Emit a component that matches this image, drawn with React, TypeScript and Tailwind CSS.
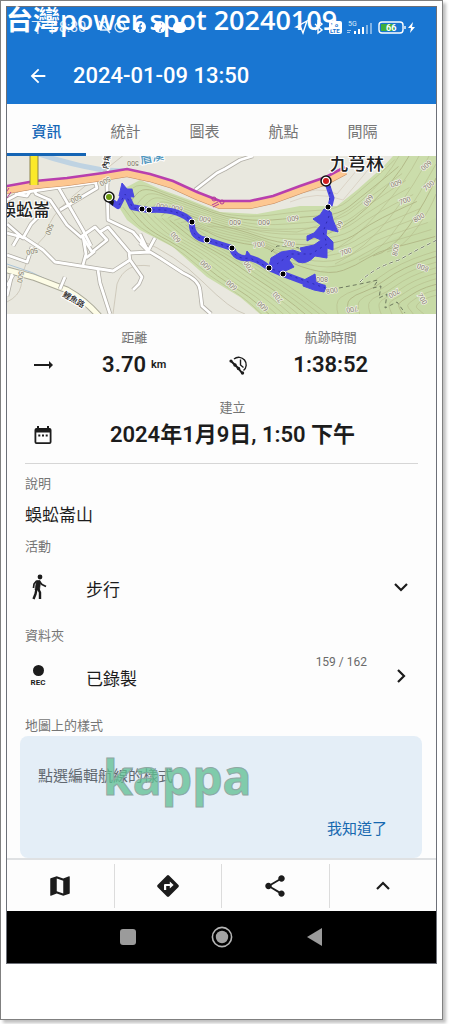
import { useState } from 'react';
import { MdArrowBack, MdMap, MdShare, MdTrendingFlat } from 'react-icons/md';

const TABS = ['資訊', '統計', '圖表', '航點', '間隔'];

type Point = [number, number];

const HILL_TOP: Point[] = [
  [112, 46], [120, 30], [133, 26], [153, 34], [183, 45], [213, 57], [250, 59],
  [293, 52], [330, 51], [350, 34], [376, 11], [386, 0],
];
const RIDGE_TOP: Point[] = [
  [190, 72], [196, 74], [204, 78], [215, 84], [240, 90], [262, 92], [285, 110],
  [325, 122], [350, 112], [372, 98], [400, 92], [430, 84],
];
const HILL_BOTTOM: Point[] = [
  [112, 50], [120, 62], [133, 74], [166, 91], [200, 121], [233, 141], [253, 160],
];
const RIDGE_BOTTOM: Point[] = [
  [190, 72], [204, 80], [220, 92], [244, 104], [270, 120], [300, 140], [326, 160],
];
const EAST_OUTER: Point[] = [
  [326, 160], [322, 146], [335, 136], [356, 130], [380, 112], [405, 100], [430, 92],
];
const EAST_INNER: Point[] = [
  [424, 160], [420, 156], [412, 152], [416, 147], [420, 145], [425, 143], [430, 142],
];

const ROADS = [
  'M0 44 L13 37 L53 31 L90 26',
  'M26 31 L29 38 L43 44 L60 69 L75 82',
  'M26 31 L20 40 L8 38',
  'M50 29 L76 74 L84 90',
  'M53 54 L90 32 L88 25',
  'M75 80 L88 71 L100 84 L85 96 Z',
  'M101 14 L100 31 L101 64 L126 76 L141 94',
  'M93 76 L101 71 L123 97 L143 96 L153 102 L176 117 Q192 124 193 134 L195 150 L204 158',
  'M76 80 L79 98 L76 109 M79 102 L88 95',
  'M0 77 L18 82 L36 94 L48 106 L93 113 L106 115 L123 104',
  'M122 97 L123 104 L135 121 L132 128 L126 134',
  'M91 114 L93 127 L103 158',
  'M0 99 L20 106 L25 91 M0 68 L16 82 L24 68 L40 52',
  'M6 90 L13 78 M0 130 L6 119 M0 140 L5 118',
  'M188 34 L210 17 L218 13 L233 4 L246 0',
  'M133 78 L141 95 L148 82 M133 87 L141 95',
  'M53 133 L58 121',
];

const HIGHWAY =
  'L28 29 L60 26 L96 21 L120 17 L143 22 L166 29 L190 40 L213 49 L243 49 L266 44 L293 34 L319 25 L338 15';

const ELEVATIONS: [number, number, number, string][] = [
  [126, 7, 180, '500'], [98, 25, 150, '500'], [69, 42, 150, '500'],
  [42, 73, 110, '500'], [25, 95, 165, '500'], [13, 121, 100, '500'],
  [155, 50, 190, '600'], [170, 52, 190, '600'], [198, 63, 190, '600'],
  [228, 66, 180, '600'], [257, 66, 180, '600'], [286, 62, 172, '600'],
  [169, 81, 230, '600'], [199, 109, 220, '600'], [225, 129, 220, '600'],
  [256, 150, 220, '600'], [252, 89, 350, '700'], [282, 88, 10, '700'],
  [242, 110, 235, '700'], [271, 141, 230, '700'], [361, 44, 125, '600'],
  [389, 27, 160, '600'], [419, 9, 140, '600'], [398, 45, 340, '700'],
  [422, 30, 320, '700'], [339, 96, 340, '700'], [412, 62, 330, '800'],
  [389, 94, 280, '800'], [416, 111, 200, '800'], [315, 123, 180, '800'],
  [325, 135, 350, '800'], [387, 137, 150, '700'], [415, 143, 60, '700'],
  [331, 70, 120, '600'], [345, 153, 170, '700'],
];

const WAYPOINTS: Point[] = [
  [135, 53], [142, 54], [185, 66], [200, 84], [225, 92], [262, 112], [276, 118], [321, 51],
];

function contour(a: Point[], b: Point[], t: number) {
  const pts = a.map(([x, y], i): Point => [
    x + (b[i][0] - x) * t,
    y + (b[i][1] - y) * t,
  ]);
  let d = `M${pts[0][0]} ${pts[0][1]}`;
  for (let i = 1; i < pts.length - 1; i++) {
    const [x, y] = pts[i];
    const [nx, ny] = pts[i + 1];
    d += ` Q${x} ${y} ${(x + nx) / 2} ${(y + ny) / 2}`;
  }
  const last = pts[pts.length - 1];
  return `${d} L${last[0]} ${last[1]}`;
}

function Contours({ from, to, count }: { from: Point[]; to: Point[]; count: number }) {
  return (
    <g fill="none" stroke="#b0b584">
      {Array.from({ length: count }, (_, i) => (
        <path
          key={i}
          d={contour(from, to, (i + 0.5) / count)}
          strokeWidth={i % 5 === 1 ? 0.9 : 0.5}
        />
      ))}
    </g>
  );
}

function TrackMap() {
  return (
    <svg
      viewBox="0 0 429 158"
      preserveAspectRatio="xMidYMid slice"
      className="block h-[158px] w-full shrink-0"
      role="img"
      aria-label="航跡地圖"
    >
      <rect width="429" height="158" fill="#e9e8df" />
      <path d="M26 -4 Q60 8 96 14 L120 15" fill="none" stroke="#bfd3e2" strokeWidth="5" />
      <path d="M0 108 Q50 122 92 158" fill="none" stroke="#a9c4d8" strokeWidth="1" />
      <path
        d="M110 48 L118 32 L133 24 L153 33 L183 44 L213 56 L250 58 L293 50 L330 50 L350 34 L376 11 L386 0 H429 V158 H253 L233 141 L200 121 L166 91 L133 74 L120 64 Z"
        fill="#cbddab"
      />
      <path
        d="M150 62 Q200 62 240 76 T310 116 L360 96 L429 62 V158 H300 L236 112 Q190 90 150 62 Z"
        fill="#c5d9a4"
        opacity=".6"
      />
      <Contours from={HILL_TOP} to={RIDGE_TOP} count={12} />
      <Contours from={HILL_BOTTOM} to={RIDGE_BOTTOM} count={10} />
      <Contours from={EAST_OUTER} to={EAST_INNER} count={9} />
      <g fill="none" stroke="#b0b584" strokeWidth=".5">
        <path d="M392 0 Q380 22 355 44 T290 76 Q240 74 200 70" />
        <path d="M402 0 Q390 22 362 50 T300 84" strokeWidth=".9" />
        <path d="M412 0 Q400 24 372 56 T318 98" />
        <path d="M422 0 Q410 26 384 60 T328 108" />
        <path d="M429 8 Q414 36 394 66 T352 104" />
        <path d="M429 22 Q420 44 402 70 T366 100" strokeWidth=".9" />
        <path d="M429 38 Q424 52 410 72 T380 96" />
        <path d="M283 46 Q310 34 336 44 L356 20 L372 0" stroke="#cdbfae" />
        <path d="M283 42 Q310 28 330 38 L350 14 L358 0" stroke="#cdbfae" />
      </g>
      <g fill="none" stroke="#bdb5a4" strokeWidth=".6">
        <path d="M118 -2 Q90 20 66 40 T38 80 Q16 100 14 130 Q12 140 0 146" />
        <path d="M143 110 Q118 106 110 128 L106 158" />
        <path d="M133 84 Q168 98 196 126 T238 158" />
      </g>
      <path d="M0 114 L26 121 L60 134 Q78 144 92 160" fill="none" stroke="#a9a898" strokeWidth="7" />
      <path d="M0 114 L26 121 L60 134 Q78 144 92 160" fill="none" stroke="#fdfce6" strokeWidth="5" />
      <g fill="none" stroke="#b1aea6" strokeWidth="4.4" strokeLinejoin="round">
        {ROADS.map((d) => (
          <path key={d} d={d} />
        ))}
      </g>
      <g fill="none" stroke="#ffffff" strokeWidth="2.8" strokeLinejoin="round">
        {ROADS.map((d) => (
          <path key={d} d={d} />
        ))}
      </g>
      <g fill="none" stroke="#6f7a60" strokeWidth="1" strokeDasharray="4 3">
        <path d="M332 132 L353 128 L371 124 L366 132 L374 130 L372 142 L380 138 L378 152 L390 146 L398 157" />
        <path d="M353 126 Q366 112 392 104 L410 94 L430 84" stroke="#eef3e2" strokeWidth="2" />
        <path d="M353 126 Q366 112 392 104 L410 94 L430 84" />
        <path d="M264 96 L270 90 L282 90 L292 92" />
      </g>
      <path d={`M-4 35 L0 34 ${HIGHWAY}`} fill="none" stroke="#c58a60" strokeWidth="8" />
      <path d={`M-4 35 L0 34 ${HIGHWAY}`} fill="none" stroke="#fdc791" strokeWidth="7" />
      <g transform="translate(0 -4)">
        <path d={`M-4 35 L0 34 ${HIGHWAY}`} fill="none" stroke="#b83fae" strokeWidth="2.6" />
      </g>
      <path d="M27 -2 V29" stroke="#8c8448" strokeWidth="9" />
      <path d="M27 -2 V29" stroke="#fbe92a" strokeWidth="7" />
      <g fill="none" stroke="#b43a98" strokeWidth="1">
        <circle cx="207" cy="43" r="2" />
        <circle cx="215" cy="46" r="2" />
        <path d="M205 49 l6 -3 M206 51 l6 -3 M2 32 l-4 6 M4 36 l-4 6" />
      </g>
      <g
        fill="#857b6e"
        stroke="#eff0e3"
        strokeWidth="1.6"
        paintOrder="stroke"
        fontSize="7"
        textAnchor="middle"
      >
        {ELEVATIONS.map(([x, y, angle, label]) => (
          <text
            key={`${x}-${y}`}
            x={x}
            y={y}
            dominantBaseline="central"
            transform={`rotate(${angle} ${x} ${y})`}
          >
            {label}
          </text>
        ))}
      </g>
      <g fill="#4a47e0" stroke="#4a47e0" strokeLinejoin="round">
        <path
          d="M104 45 L111 50 L118 36 L125 51 L135 53 L142 54 Q172 52 185 66 Q184 82 200 84 L225 92 Q228 104 243 102 Q252 104 262 112 L276 118 L300 127 L318 132"
          fill="none"
          strokeWidth="6"
        />
        <path d="M112 40 L115 27 L120 33 L125 33 L127 41 Z M238 102 L240 95 L244 100 Z" />
        <path d="M320 27 L325 42 L323 50" fill="none" strokeWidth="5" />
        <path d="M317 53 L324 56 L326 64 L331 76 L320 73 L319 79 L326 86 L326 94 L320 92 L320 102 L308 100 Q300 109 291 106 L285 101 L282 104 L287 111 L276 116 L262 110 L264 102 L274 96 L286 94 L295 97 L293 92 L307 89 L314 84 L307 81 L300 85 L300 80 L307 77 L314 69 L306 63 L313 59 Z" />
        <path d="M297 124 L308 118 L309 126 L319 131 L317 136 L307 134 L296 130 Z" />
      </g>
      <g fill="none" stroke="#2e2cae" strokeWidth="1" strokeDasharray="2 4">
        <path d="M112 49 L118 38 L126 52 L142 54 Q172 52 185 66 Q184 82 200 84 L225 92 Q228 104 243 102 L262 112 L318 132" />
        <path d="M323 30 L322 60 L316 76 L320 88 L304 98 L284 98 L270 108" />
      </g>
      {WAYPOINTS.map(([x, y]) => (
        <circle key={x} cx={x} cy={y} r="3" fill="#000" stroke="#fff" strokeWidth="1" />
      ))}
      <circle cx="102" cy="41" r="5" fill="#fff" stroke="#111" strokeWidth="1.5" />
      <circle cx="102" cy="41" r="3" fill="#6f9c12" />
      <path d="M101 46 L107 45 L106 50 Z" fill="#111" />
      <circle cx="319" cy="25" r="5" fill="#fff" stroke="#111" strokeWidth="1.5" />
      <circle cx="319" cy="25" r="3" fill="#d02020" />
      <g fill="#222" stroke="#fff" strokeWidth="2" paintOrder="stroke" fontWeight="500">
        <text x="-8" y="60" fontSize="17">蜈蚣崙</text>
        <text x="323" y="14" fontSize="18">九芎林</text>
        <text x="55" y="140" fontSize="8" transform="rotate(30 55 140)">鯉魚路</text>
        <text x="92" y="9" fontSize="8" transform="rotate(-80 99 6)">內埔</text>
        <text x="134" y="8" fontSize="12" fill="#4b93bb" transform="rotate(-12 134 8)">眉溪</text>
      </g>
    </svg>
  );
}

function StatusBar() {
  return (
    <div className="flex h-10 items-center justify-between pr-5 pl-6 text-xs text-white">
      <div className="flex items-center gap-[11px]">
        <span className="text-sm text-white/85">下午8:30</span>
        <svg viewBox="0 0 90 14" className="h-[14px] w-[90px]" fill="none" stroke="#dcebfa" strokeWidth="1.3">
          <path d="M3 10 Q5 9 5 6 Q5 2 8 2 Q11 2 11 6 L12 10 Z M2 1 L13 13" />
          <circle cx="23" cy="7" r="5" />
          <path d="M23 4 V7 L26 8" />
          <circle cx="43" cy="7" r="6" fill="#fff" stroke="none" />
          <path d="M45 4 h-1 q-1 0 -1 2 V12 M41 8 h4" stroke="#1976d2" />
          <circle cx="63" cy="7" r="6" fill="#fff" stroke="none" />
          <path d="M65 4 h-1 q-1 0 -1 2 V12 M61 8 h4" stroke="#1976d2" />
          <rect x="76" y="2" width="13" height="11" rx="5" fill="#fff" stroke="none" />
        </svg>
      </div>
      <svg viewBox="0 0 122 18" className="h-[18px] w-[122px]" fill="none" stroke="#fff" strokeWidth="1.4">
        <path d="M2 9 L13 3 L9 15 L7 10 Z" />
        <path d="M21 6 L28 12 L24 15 V3 L28 6 L21 12" />
        <rect x="35" y="3" width="13" height="13" rx="2" fill="#fff" stroke="none" />
        <g fill="#1976d2" stroke="none" fontSize="6" fontWeight="700">
          <text x="37" y="9">Vo</text>
          <text x="36" y="15">LTE</text>
        </g>
        <text x="54" y="8" fill="#dcebfa" stroke="none" fontSize="7">5G</text>
        <g fill="#fff" stroke="none">
          <path d="M60 13 h2 v3 h-2 Z M64 11 h2 v5 h-2 Z M68 9 h2 v7 h-2 Z" />
          <path d="M72 7 h2 v9 h-2 Z M76 5 h2 v11 h-2 Z" opacity=".45" />
          <path d="M53 12 h4 v1 h-4 Z M53 14 h3 v1 h-3 Z" opacity=".6" />
        </g>
        <rect x="85" y="4" width="24" height="11" rx="3" />
        <rect x="87" y="6" width="13" height="7" fill="#3fae3c" stroke="none" />
        <path d="M111 8 V11" />
        <text x="92" y="13" fill="#fff" stroke="none" fontSize="9" fontWeight="700">66</text>
        <path d="M119 4 L114 10 H117 L116 15 L121 9 H118 Z" fill="#fff" stroke="none" />
      </svg>
    </div>
  );
}

function TrackTimeIcon() {
  return (
    <svg viewBox="0 0 20 20" className="size-5" fill="none" stroke="#1c1c1c" strokeWidth="1.4">
      <path d="M5 4 A7.2 7.2 0 1 1 14.5 15.5" />
      <path d="M11.5 4.5 V10 L14.5 12.5" />
      <path d="M2 6 L6 10 L9 13 L13 18" strokeWidth="2" />
      <g fill="#1c1c1c" stroke="none">
        <circle cx="2" cy="6" r="1.6" />
        <circle cx="6" cy="10" r="1.7" />
        <circle cx="9.5" cy="13.5" r="1.7" />
        <circle cx="13.5" cy="18" r="1.7" />
      </g>
    </svg>
  );
}

function CalendarIcon() {
  return (
    <svg viewBox="0 0 18 20" className="h-5 w-[18px]" fill="#1c1c1c">
      <path
        fillRule="evenodd"
        d="M3 1 h2 v2 h8 V1 h2 v2 h.5 a2 2 0 0 1 2 2 v12 a2 2 0 0 1 -2 2 h-13 a2 2 0 0 1 -2 -2 V5 a2 2 0 0 1 2 -2 H3 Z M2.3 7.5 v9.7 h13.4 V7.5 Z"
      />
      <path d="M4.3 9.5 h2 v2 h-2 Z M8 9.5 h2 v2 H8 Z M11.7 9.5 h2 v2 h-2 Z" />
    </svg>
  );
}

function WalkIcon() {
  return (
    <svg
      viewBox="0 0 16 26"
      className="h-[26px] w-4 shrink-0"
      fill="none"
      stroke="#1c1c1c"
      strokeLinejoin="round"
    >
      <circle cx="9" cy="3" r="2.4" fill="#1c1c1c" stroke="none" />
      <path d="M5.5 6.5 H9 L9.5 9 L8.5 16 H4 Z" fill="#1c1c1c" strokeWidth=".6" />
      <path d="M5.5 7 L3 10 L2.5 14" strokeWidth="1.7" />
      <path d="M8.5 7.5 L11 10.5 L15 12.5" strokeWidth="1.8" />
      <path d="M5.5 15 L4.5 20 L2.5 25" strokeWidth="2.4" />
      <path d="M7 14.5 L9 18.5 V25" strokeWidth="2.4" />
    </svg>
  );
}

function DirectionsIcon() {
  return (
    <svg viewBox="0 0 24 24" className="size-6" fill="#1c1c1c">
      <path
        fillRule="evenodd"
        d="M12 1 Q12.6 1 13 1.5 L22.5 11 Q23.3 12 22.5 13 L13 22.5 Q12 23.3 11 22.5 L1.5 13 Q.7 12 1.5 11 L11 1.5 Q11.4 1 12 1 Z M8 16 H10.2 V12 H13.8 V14.6 L17.6 11 L13.8 7.4 V10 H9 Q8 10 8 11 Z"
      />
    </svg>
  );
}

function Chevron({ d }: { d: string }) {
  return (
    <svg viewBox="0 0 16 16" className="size-4" fill="none" stroke="#1c1c1c" strokeWidth="2.2">
      <path d={d} />
    </svg>
  );
}

function Stat({
  icon,
  label,
  value,
  unit,
}: {
  icon: React.ReactNode;
  label: string;
  value: string;
  unit?: string;
}) {
  return (
    <div className="flex flex-1 items-end pr-[13px]">
      <div className="flex h-7 w-[35px] shrink-0 items-center justify-center text-[#1c1c1c]">{icon}</div>
      <div className="flex-1 text-center">
        <div className="text-[13px] leading-5 text-[#757575]">{label}</div>
        <div className="mt-[3px] flex h-7 items-center justify-center gap-[5px] text-[22px] leading-7 font-semibold text-[#1c1c1c]">
          {value}
          {unit && <span className="text-[11px]">{unit}</span>}
        </div>
      </div>
    </div>
  );
}

export default function App() {
  const [tab, setTab] = useState(TABS[0]);

  return (
    <div className="bg-white pr-[6px] pb-[6px] font-[Roboto,'Noto_Sans_CJK_TC',sans-serif]">
      <div className="border border-[#808080] p-[5px] pb-[55px] shadow-[3px_3px_3px_rgba(0,0,0,0.25)]">
        <div className="relative border border-[#6d7078] bg-[#fdfdfd]">
          <div className="pointer-events-none absolute -top-[5px] -left-px text-[27px] leading-9 font-semibold whitespace-nowrap text-white font-['Open_Sans','Noto_Sans_CJK_TC',sans-serif]">
            台灣power spot 20240109
          </div>

          <header className="bg-[#1976d2]">
            <StatusBar />
            <div className="flex h-[57px] items-center gap-6 pl-5 text-white">
              <button type="button" aria-label="返回">
                <MdArrowBack className="size-[22px]" />
              </button>
              <h1 className="text-[22px] leading-7 font-medium">2024-01-09 13:50</h1>
            </div>
          </header>

          <nav className="flex h-[52px]">
            {TABS.map((name) => (
              <button
                key={name}
                type="button"
                onClick={() => setTab(name)}
                className={`w-[79px] border-b-3 pt-[7px] text-[15px] ${
                  tab === name
                    ? 'border-[#1565b5] font-medium text-[#1668b8]'
                    : 'border-transparent text-[#757575]'
                }`}
              >
                {name}
              </button>
            ))}
          </nav>

          <TrackMap />

          <main className="px-[18px] pt-[14px]">
            <div className="flex">
              <Stat icon={<MdTrendingFlat className="size-6" />} label="距離" value="3.70" unit="km" />
              <Stat icon={<TrackTimeIcon />} label="航跡時間" value="1:38:52" />
            </div>
            <div className="mt-[19px] flex border-b border-[#d6d6d6] pb-[14px]">
              <Stat icon={<CalendarIcon />} label="建立" value="2024年1月9日, 1:50 下午" />
            </div>

            <h2 className="mt-[10px] text-[13px] leading-5 text-[#757575]">說明</h2>
            <p className="mt-[9px] text-[17px] leading-6 text-[#1c1c1c]">蜈蚣崙山</p>

            <label htmlFor="activity" className="mt-[10px] block text-[13px] leading-5 text-[#757575]">
              活動
            </label>
            <div className="relative mt-2 flex h-11 items-center pl-[6px]">
              <WalkIcon />
              <select
                id="activity"
                className="h-full min-w-0 flex-1 appearance-none bg-transparent pt-2 pl-[39px] text-[17px] text-[#1c1c1c]"
              >
                <option>步行</option>
              </select>
              <div className="pointer-events-none absolute right-[9px]">
                <Chevron d="M2 5 L8 11 L14 5" />
              </div>
            </div>

            <h2 className="mt-[17px] text-[13px] leading-5 text-[#757575]">資料夾</h2>
            <button type="button" className="mt-[2px] flex h-14 w-full items-center pr-[9px] text-left">
              <span className="flex w-[26px] flex-col items-center text-[8px] leading-[10px] font-bold text-[#1c1c1c]">
                <span className="mb-[2px] size-[11px] rounded-full bg-[#1c1c1c]" />
                REC
              </span>
              <span className="flex-1 pt-2 pl-[35px] text-[17px] text-[#1c1c1c]">已錄製</span>
              <span className="mr-[26px] mb-7 text-xs text-[#6a6a6a]">159 / 162</span>
              <Chevron d="M5 2 L11 8 L5 14" />
            </button>
            <h2 className="mt-3 text-[13px] leading-5 text-[#757575]">地圖上的樣式</h2>
          </main>

          <section className="relative mr-[14px] ml-[13px] flex h-[122px] flex-col justify-between rounded-lg bg-[#e4eef7] pt-7 pr-[35px] pb-[17px] pl-[18px]">
            <p className="text-[15px] leading-6 text-[#616870]">點選編輯航線的樣式</p>
            <button type="button" className="self-end text-[15px] leading-6 text-[#1668b0]">
              我知道了
            </button>
            <div className="pointer-events-none absolute top-[11px] left-[83px] text-[48px] leading-[60px] font-bold text-[#5fc092]/75 [-webkit-text-stroke:1px_#8fa8a4] font-['Open_Sans',sans-serif]">
              kappa
            </div>
          </section>

          <footer className="relative flex h-[53px] items-center divide-x divide-[#dcdcdc] border-t-2 border-[#dfe1e3] bg-[#fdfdfd] text-[#1c1c1c]">
            <button type="button" aria-label="地圖" className="flex h-11 flex-1 items-center justify-center">
              <MdMap className="size-[26px]" />
            </button>
            <button type="button" aria-label="導航" className="flex h-11 flex-1 items-center justify-center">
              <DirectionsIcon />
            </button>
            <button type="button" aria-label="分享" className="flex h-11 flex-1 items-center justify-center">
              <MdShare className="size-[26px]" />
            </button>
            <button type="button" aria-label="更多" className="flex h-11 flex-1 items-center justify-center">
              <Chevron d="M2 11 L8 5 L14 11" />
            </button>
          </footer>

          <div className="flex h-[52px] items-center justify-center gap-[73px] bg-black">
            <button type="button" aria-label="最近使用" className="flex size-5 items-center justify-center">
              <span className="size-4 rounded-[3px] bg-[#9b9b9b]" />
            </button>
            <button type="button" aria-label="主畫面">
              <svg viewBox="0 0 22 22" className="size-[22px]">
                <circle cx="11" cy="11" r="9.6" fill="none" stroke="#b5b5b5" strokeWidth="1.6" />
                <circle cx="11" cy="11" r="6.2" fill="#a3a3a3" />
              </svg>
            </button>
            <button type="button" aria-label="返回上頁">
              <svg viewBox="0 0 20 20" className="size-5">
                <path d="M1 10 L16 1 V19 Z" fill="#9b9b9b" />
              </svg>
            </button>
          </div>
        </div>
      </div>
    </div>
  );
}
